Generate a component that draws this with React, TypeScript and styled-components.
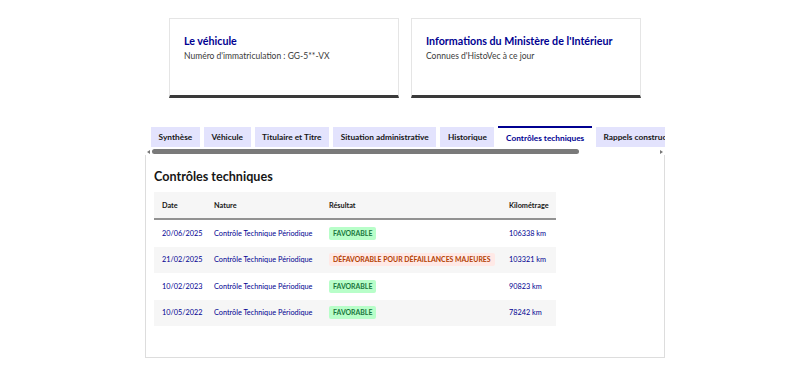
import React from "react";
import styled, { createGlobalStyle } from "styled-components";

const GlobalStyle = createGlobalStyle`
  body {
    margin: 0;
    background: #ffffff;
    font-family: Lato, "Noto Sans", Arial, sans-serif;
    color: #3a3a3a;
  }
`;

const Wrapper = styled.div`
  width: 520px;
  margin-left: 145px;
  padding-top: 18px;
`;

const CardsRow = styled.div`
  display: grid;
  grid-template-columns: 1fr 1fr;
  gap: 12px;
  padding: 0 24px;
`;

const Card = styled.div`
  height: 80px;
  border: 1px solid #e5e5e5;
  border-bottom: 3px solid #3a3a3a;
  padding: 14px 14px 0;
  box-sizing: border-box;
`;

const CardTitle = styled.h3`
  margin: 0 0 1px;
  font-size: 10.7px;
  font-weight: 700;
  color: #000091;
  line-height: 16px;
  white-space: nowrap;
`;

const CardText = styled.p`
  margin: 0;
  font-size: 8.5px;
  line-height: 13px;
  color: #3a3a3a;
`;

const TabsArea = styled.div`
  margin-top: 28px;
`;

const TabList = styled.div`
  display: flex;
  gap: 4px;
  padding-left: 6px;
  overflow: hidden;
  white-space: nowrap;
`;

const Tab = styled.div<{ $active?: boolean }>`
  flex: none;
  height: ${(p) => (p.$active ? "21px" : "20px")};
  margin-top: ${(p) => (p.$active ? "0" : "1px")};
  padding: 0 7.6px;
  display: flex;
  align-items: center;
  font-size: 8.3px;
  font-weight: 700;
  color: ${(p) => (p.$active ? "#000091" : "#161616")};
  background: ${(p) => (p.$active ? "#ffffff" : "#e3e3fd")};
  border-top: ${(p) => (p.$active ? "2px solid #000091" : "none")};
  box-sizing: border-box;
`;

const Scrollbar = styled.div`
  display: flex;
  align-items: center;
  height: 7px;
  margin-top: 1px;
  padding: 0 2px;
  gap: 2px;
`;

const Arrow = styled.span<{ $dir: "left" | "right" }>`
  width: 0;
  height: 0;
  border-top: 2.5px solid transparent;
  border-bottom: 2.5px solid transparent;
  ${(p) =>
    p.$dir === "left"
      ? "border-right: 3px solid #777;"
      : "border-left: 3px solid #777;"}
`;

const Track = styled.div`
  flex: 1;
  height: 5px;
`;

const Thumb = styled.div`
  width: 427px;
  height: 5px;
  border-radius: 3px;
  background: #7a7a7a;
`;

const Panel = styled.div`
  border: 1px solid #dddddd;
  border-top: none;
  height: 203px;
  padding: 13px 8px 0;
  box-sizing: border-box;
`;

const PanelTitle = styled.h2`
  margin: 0 0 6px;
  font-size: 12.6px;
  font-weight: 700;
  color: #161616;
  line-height: 18px;
`;

const Table = styled.table`
  width: 402px;
  table-layout: fixed;
  border-collapse: collapse;
  font-size: 7.3px;
`;

const HeadCell = styled.th<{ $w?: number }>`
  width: ${(p) => (p.$w ? `${p.$w}px` : "auto")};
  height: 27px;
  padding: 0 8px;
  text-align: left;
  font-weight: 700;
  color: #161616;
  background: #f6f6f6;
  border-bottom: 2px solid #929292;
  box-sizing: border-box;
`;

const Row = styled.tr`
  &:nth-child(even) td {
    background: #f6f6f6;
  }
`;

const Cell = styled.td`
  height: 26.5px;
  padding: 0 8px;
  color: #000091;
  white-space: nowrap;
`;

const Badge = styled.span<{ $ok: boolean }>`
  display: inline-block;
  padding: 2px 4px;
  border-radius: 2px;
  font-size: 6.9px;
  line-height: 9px;
  font-weight: 700;
  text-transform: uppercase;
  color: ${(p) => (p.$ok ? "#18753c" : "#b34000")};
  background: ${(p) => (p.$ok ? "#b8fec9" : "#ffe9e6")};
`;

const tabs = [
  "Synthèse",
  "Véhicule",
  "Titulaire et Titre",
  "Situation administrative",
  "Historique",
  "Contrôles techniques",
  "Rappels constructeur",
];

const controles = [
  { date: "20/06/2025", ok: true, resultat: "Favorable", km: "106338 km" },
  {
    date: "21/02/2025",
    ok: false,
    resultat: "Défavorable pour défaillances majeures",
    km: "103321 km",
  },
  { date: "10/02/2023", ok: true, resultat: "Favorable", km: "90823 km" },
  { date: "10/05/2022", ok: true, resultat: "Favorable", km: "78242 km" },
];

export default function App() {
  return (
    <>
      <GlobalStyle />
      <Wrapper>
        <CardsRow>
          <Card>
            <CardTitle>Le véhicule</CardTitle>
            <CardText>Numéro d'immatriculation : GG-5**-VX</CardText>
          </Card>
          <Card>
            <CardTitle>Informations du Ministère de l'Intérieur</CardTitle>
            <CardText>Connues d'HistoVec à ce jour</CardText>
          </Card>
        </CardsRow>

        <TabsArea>
          <TabList>
            {tabs.map((t) => (
              <Tab key={t} $active={t === "Contrôles techniques"}>
                {t}
              </Tab>
            ))}
          </TabList>
          <Scrollbar>
            <Arrow $dir="left" />
            <Track>
              <Thumb />
            </Track>
            <Arrow $dir="right" />
          </Scrollbar>
          <Panel>
            <PanelTitle>Contrôles techniques</PanelTitle>
            <Table>
              <thead>
                <tr>
                  <HeadCell $w={52}>Date</HeadCell>
                  <HeadCell $w={115}>Nature</HeadCell>
                  <HeadCell $w={180}>Résultat</HeadCell>
                  <HeadCell>Kilométrage</HeadCell>
                </tr>
              </thead>
              <tbody>
                {controles.map((c) => (
                  <Row key={c.date}>
                    <Cell>{c.date}</Cell>
                    <Cell>Contrôle Technique Périodique</Cell>
                    <Cell>
                      <Badge $ok={c.ok}>{c.resultat}</Badge>
                    </Cell>
                    <Cell>{c.km}</Cell>
                  </Row>
                ))}
              </tbody>
            </Table>
          </Panel>
        </TabsArea>
      </Wrapper>
    </>
  );
}
